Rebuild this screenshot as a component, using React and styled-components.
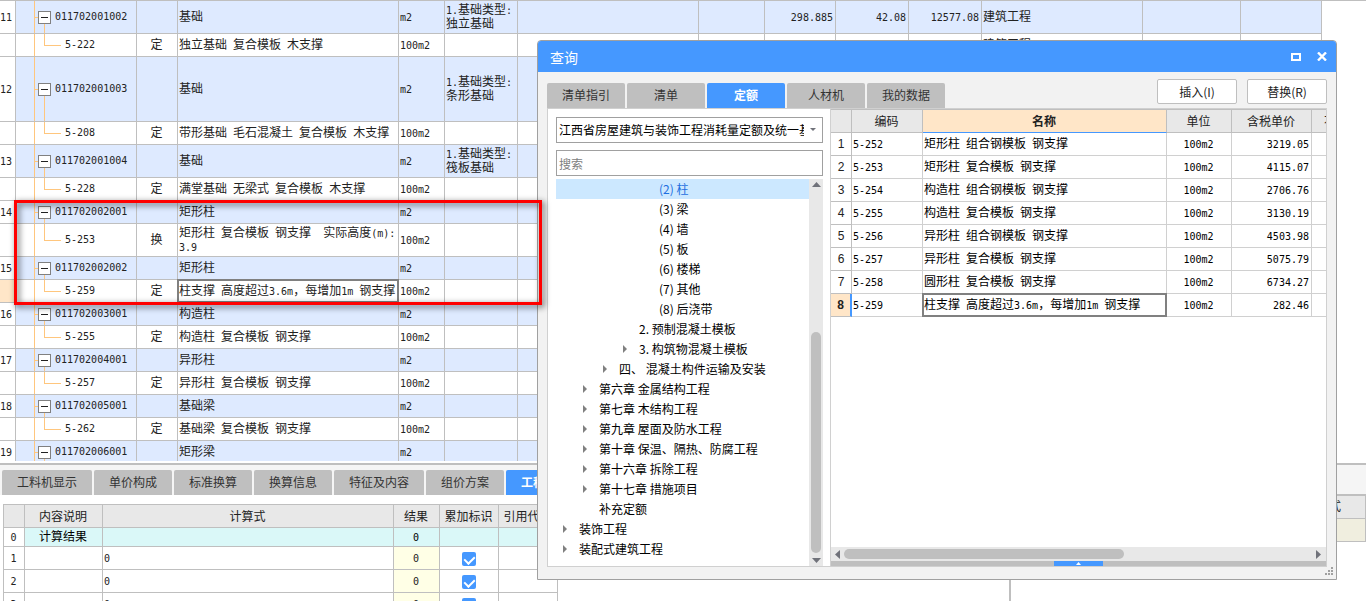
import React from "react"
import styled, { createGlobalStyle, css } from "styled-components"

const Colors = {
  blue: "#4598ff",
  line: "#bfbfbf",
  lightLine: "#d0d0d0",
  group: "#deeaff",
  head: "#e8e8e8",
  panel: "#f2f2f2",
  peach: "#ffe6c8",
  tree: "#ffc67d",
  tab: "#bfbfbf",
  arrow: "#70727a",
}

const GlobalStyle = createGlobalStyle`
  * {
    box-sizing: border-box;
  }
  body {
    margin: 0;
    background: #fff;
    color: #222;
    font: 12px/14px "Noto Sans CJK SC", sans-serif;
  }
  button, input, select {
    font: inherit;
    color: inherit;
    margin: 0;
  }
`

const Page = styled.div`
  display: flex;
  flex-direction: column;
  height: 100vh;
  overflow: hidden;
`

const Mono = styled.span`
  font-family: "DejaVu Sans Mono", monospace;
  font-size: 10px;
  line-height: 0;
`

/* grid text: half width latin next to full width hanzi */
const GridText = ({ children }) =>
  String(children)
    .split(/([\x20-\x7e]+)/)
    .filter(Boolean)
    .map((part, i) =>
      /^[\x20-\x7e]/.test(part) ? (
        <Mono key={i}>{part}</Mono>
      ) : (
        <React.Fragment key={i}>{part}</React.Fragment>
      )
    )

const Table = styled.table`
  border-collapse: separate;
  border-spacing: 0;
  table-layout: fixed;
  width: ${(p) => p.$width || "100%"};
`

const Cell = styled.td`
  height: ${(p) => p.$height || 23}px;
  padding: 0 2px 2px 1px;
  border-right: 1px solid ${(p) => p.$line || Colors.line};
  border-bottom: 1px solid ${(p) => p.$line || Colors.line};
  background-color: ${(p) => p.$bg || "transparent"};
  text-align: ${(p) => p.$align || "left"};
  vertical-align: middle;
  overflow: hidden;
  white-space: ${(p) => (p.$wrap ? "pre-wrap" : "pre")};
  ${(p) =>
    p.$selected &&
    css`
      position: relative;
      overflow: visible;
      &::after {
        content: "";
        position: absolute;
        inset: -1px;
        border: 2px solid #808080;
      }
    `}
`

const HeadCell = styled.th`
  height: ${(p) => p.$height || 24}px;
  padding: 0 1px 0 0;
  border-top: 1px solid ${Colors.line};
  border-right: 1px solid ${Colors.line};
  border-bottom: 1px solid ${(p) => (p.$active ? Colors.blue : Colors.line)};
  background: ${(p) => (p.$active ? Colors.peach : Colors.head)};
  color: #222;
  font-weight: ${(p) => (p.$active ? 700 : 400)};
  overflow: hidden;
  white-space: nowrap;
`

/* ---------- main list ---------- */

const Sheet = styled.div`
  flex: 1;
  min-height: 0;
  margin-bottom: 2px;
  overflow: hidden;
  border-top: 1px solid ${Colors.line};
`

const NameCell = styled(Cell)`
  padding-right: 0;
`

const TreeCell = styled(Cell)`
  padding: 0 0 0 ${(p) => (p.$child ? 49 : 22)}px;
  background-image: linear-gradient(${Colors.tree}, ${Colors.tree}),
    linear-gradient(${Colors.tree}, ${Colors.tree}),
    linear-gradient(${Colors.tree}, ${Colors.tree});
  background-repeat: no-repeat;
  background-size: 1px 100%,
    ${(p) => (p.$child ? "17px 1px, 1px 50%" : "4px 1px, 1px 50%")};
  background-position: 18px 0,
    ${(p) => (p.$child ? "28px 50%, 28px 0" : "18px 50%, 28px 100%")};
`

const TreeLabel = styled.div`
  display: flex;
  align-items: center;
  gap: 4px;
`

const Toggle = styled.button`
  display: flex;
  align-items: center;
  justify-content: center;
  width: 13px;
  height: 13px;
  padding: 0;
  border: 1px solid #808080;
  background: #fff;
  &::before {
    content: "";
    width: 7px;
    height: 1px;
    background: #222;
  }
`

const sheetColumns = [16, 121, 41, 221, 46, 73, 181, 66, 71, 73, 73, 161, 98, 81]

const sheetRows = [
  {
    no: "11",
    code: "011702001002",
    name: "基础",
    unit: "m2",
    note: "1.基础类型:独立基础",
    height: 33,
    values: ["298.885", "42.08", "12577.08"],
    kind: "建筑工程",
  },
  { code: "5-222", type: "定", name: "独立基础 复合模板 木支撑", unit: "100m2", kind: "建筑工程" },
  { no: "12", code: "011702001003", name: "基础", unit: "m2", note: "1.基础类型:条形基础", height: 65 },
  { code: "5-208", type: "定", name: "带形基础 毛石混凝土 复合模板 木支撑", unit: "100m2" },
  { no: "13", code: "011702001004", name: "基础", unit: "m2", note: "1.基础类型:筏板基础", height: 33 },
  { code: "5-228", type: "定", name: "满堂基础 无梁式 复合模板 木支撑", unit: "100m2" },
  { no: "14", code: "011702002001", name: "矩形柱", unit: "m2" },
  {
    code: "5-253",
    type: "换",
    name: "矩形柱 复合模板 钢支撑  实际高度(m):\n3.9",
    unit: "100m2",
    height: 33,
  },
  { no: "15", code: "011702002002", name: "矩形柱", unit: "m2" },
  {
    code: "5-259",
    type: "定",
    name: "柱支撑 高度超过3.6m，每增加1m 钢支撑",
    unit: "100m2",
    selected: true,
  },
  { no: "16", code: "011702003001", name: "构造柱", unit: "m2" },
  { code: "5-255", type: "定", name: "构造柱 复合模板 钢支撑", unit: "100m2" },
  { no: "17", code: "011702004001", name: "异形柱", unit: "m2" },
  { code: "5-257", type: "定", name: "异形柱 复合模板 钢支撑", unit: "100m2" },
  { no: "18", code: "011702005001", name: "基础梁", unit: "m2" },
  { code: "5-262", type: "定", name: "基础梁 复合模板 钢支撑", unit: "100m2" },
  { no: "19", code: "011702006001", name: "矩形梁", unit: "m2" },
]

const Columns = ({ widths }) => (
  <colgroup>
    {widths.map((width, index) => (
      <col key={index} width={width} />
    ))}
  </colgroup>
)

const NumberCell = styled(Cell)`
  padding: 0 5px 2px 0;
  text-align: right;
  overflow: visible;
`

const SheetRow = ({ row }) => {
  const child = !row.no
  const bg = child ? "#fff" : Colors.group
  const cell = { $bg: bg, $height: row.height }
  const [amount = "", price = "", total = ""] = row.values || []
  return (
    <tr>
      <NumberCell $height={row.height} $bg={row.selected ? Colors.peach : "#fff"}>
        <GridText>{row.no || ""}</GridText>
      </NumberCell>
      <TreeCell {...cell} $child={child}>
        <TreeLabel>
          {!child && <Toggle aria-label="折叠" />}
          <GridText>{row.code}</GridText>
        </TreeLabel>
      </TreeCell>
      <Cell {...cell} $align="center">{row.type}</Cell>
      <NameCell {...cell} $selected={row.selected}>
        <GridText>{row.name}</GridText>
      </NameCell>
      <Cell {...cell}><GridText>{row.unit}</GridText></Cell>
      <Cell {...cell} $wrap><GridText>{row.note || ""}</GridText></Cell>
      <Cell {...cell} />
      <Cell {...cell} />
      <Cell {...cell} $align="right"><GridText>{amount}</GridText></Cell>
      <Cell {...cell} $align="right"><GridText>{price}</GridText></Cell>
      <Cell {...cell} $align="right"><GridText>{total}</GridText></Cell>
      <Cell {...cell}>{row.kind}</Cell>
      <Cell {...cell} />
      <Cell {...cell} />
    </tr>
  )
}

/* ---------- lower pane ---------- */

const Lower = styled.div`
  display: flex;
  flex: 0 0 138px;
  border-top: 2px solid ${Colors.line};
  overflow: hidden;
`

const LowerLeft = styled.div`
  flex: 1;
  min-width: 0;
  border-right: 2px solid ${Colors.line};
`

const LowerRight = styled.div`
  flex: 0 0 355px;
`

const TabStrip = styled.div`
  display: flex;
  gap: 2px;
  height: 30px;
  padding: 5px 0 0 2px;
  background: #f5f5f5;
`

const RightStrip = styled.div`
  height: 31px;
  background: #f5f5f5;
  border-bottom: 2px solid ${Colors.line};
`

const Tab = styled.button`
  height: 25px;
  min-width: 78px;
  padding: 0 15px 2px;
  border: 0;
  border-radius: 2px 2px 0 0;
  white-space: nowrap;
  background: ${(p) => (p.$active ? Colors.blue : Colors.tab)};
  color: ${(p) => (p.$active ? "#fff" : "#333")};
  font-weight: ${(p) => (p.$active ? 700 : 400)};
`

const TableBox = styled.div`
  padding: 9px 0 0 3px;
`

const EdgeTable = styled(Table)`
  border-left: 1px solid ${Colors.line};
`

const ResultCell = styled(Cell)`
  color: #000;
`

const Check = styled.input`
  appearance: none;
  display: inline-flex;
  justify-content: center;
  width: 14px;
  height: 14px;
  border-radius: 2px;
  background: ${Colors.blue};
  vertical-align: middle;
  &:checked::after {
    content: "";
    width: 5px;
    height: 8px;
    margin-top: 2px;
    border: solid #fff;
    border-width: 0 2px 2px 0;
    transform: rotate(45deg);
  }
`

const CheckCell = styled(Cell)`
  padding: 0;
  text-align: center;
`

const lowerTabs = ["工料机显示", "单价构成", "标准换算", "换算信息", "特征及内容", "组价方案", "工程量明细"]

const LowerPane = () => (
  <Lower>
    <LowerLeft>
      <TabStrip>
        {lowerTabs.map((name) => (
          <Tab key={name} $active={name === "工程量明细"}>
            {name}
          </Tab>
        ))}
      </TabStrip>
      <TableBox>
        <EdgeTable $width="555px">
          <Columns widths={[21, 78, 291, 46, 59, 59]} />
          <thead>
            <tr>
              <HeadCell />
              <HeadCell>内容说明</HeadCell>
              <HeadCell>计算式</HeadCell>
              <HeadCell>结果</HeadCell>
              <HeadCell>累加标识</HeadCell>
              <HeadCell>引用代码</HeadCell>
            </tr>
          </thead>
          <tbody>
            <tr>
              <Cell $height={19} $align="center"><GridText>0</GridText></Cell>
              <ResultCell $height={19} $align="center" $bg="#daf8f8">计算结果</ResultCell>
              <ResultCell $height={19} $bg="#daf8f8" />
              <ResultCell $height={19} $align="center" $bg="#daf8f8">
                <GridText>0</GridText>
              </ResultCell>
              <ResultCell $height={19} $bg="#daf8f8" />
              <ResultCell $height={19} $bg="#daf8f8" />
            </tr>
            {[1, 2, 3].map((no) => (
              <tr key={no}>
                <Cell $align="center"><GridText>{no}</GridText></Cell>
                <Cell />
                <Cell><GridText>0</GridText></Cell>
                <Cell $align="center" $bg="#ffffe6"><GridText>0</GridText></Cell>
                <CheckCell>
                  <Check type="checkbox" defaultChecked aria-label={`累加标识 ${no}`} />
                </CheckCell>
                <Cell />
              </tr>
            ))}
          </tbody>
        </EdgeTable>
      </TableBox>
    </LowerLeft>
    <LowerRight>
      <RightStrip />
      <Table>
        <Columns widths={[271, 84]} />
        <tbody>
          <tr>
            <Cell $bg={Colors.head} />
            <Cell $bg={Colors.head} $align="center">计算式</Cell>
          </tr>
          <tr>
            <Cell $bg="#f0eedf" />
            <Cell $bg="#f0eedf" />
          </tr>
        </tbody>
      </Table>
    </LowerRight>
  </Lower>
)

/* ---------- query window ---------- */

const Window = styled.section`
  position: absolute;
  top: 40px;
  left: 537px;
  display: flex;
  flex-direction: column;
  width: 800px;
  height: 540px;
  border: 1px solid #a0a0a0;
  border-radius: 4px 4px 0 0;
  background: ${Colors.panel};
  color: #000;
  overflow: hidden;
`

const TitleBar = styled.header`
  display: flex;
  align-items: center;
  flex: 0 0 31px;
  gap: 16px;
  padding: 0 9px 0 12px;
  background: ${Colors.blue};
  color: #fff;
`

const Title = styled.h1`
  flex: 1;
  margin: 0;
  font-size: 14px;
  line-height: 18px;
  font-weight: 400;
`

const IconButton = styled.button`
  display: flex;
  padding: 0;
  border: 0;
  background: none;
`

const Toolbar = styled.div`
  display: flex;
  align-items: flex-end;
  flex: 0 0 36px;
  gap: 2px;
  padding: 0 9px;
`

const Actions = styled.div`
  display: flex;
  gap: 10px;
  margin: 0 0 4px auto;
`

const Action = styled.button`
  width: 80px;
  height: 25px;
  padding: 0;
  border: 1px solid ${Colors.line};
  border-radius: 2px;
  background: #fff;
  color: #222;
`

const Content = styled.div`
  display: flex;
  flex: 1;
  min-height: 0;
  margin: 0 9px;
  border: 1px solid ${Colors.lightLine};
  background: #fff;
`

const Catalog = styled.div`
  display: flex;
  flex-direction: column;
  flex: 0 0 282px;
  padding: 8px 7px 0 8px;
`

const SelectBox = styled.label`
  display: grid;
  grid-template-columns: 1fr 18px;
  align-items: center;
  height: 26px;
  margin-bottom: 7px;
  padding-left: 2px;
  border: 1px solid #a0a0a0;
`

const Select = styled.select`
  appearance: none;
  min-width: 0;
  height: 24px;
  padding: 0;
  border: 0;
  background: none;
  outline: 0;
  text-overflow: clip;
`

const Search = styled.input`
  height: 26px;
  margin-bottom: 3px;
  padding: 0 2px;
  border: 1px solid #a0a0a0;
  &::placeholder {
    color: #808080;
  }
`

const TreeBox = styled.div`
  display: flex;
  flex: 1;
  min-height: 0;
`

const Tree = styled.ul`
  flex: 1;
  margin: 0;
  padding: 0;
  list-style: none;
  overflow: hidden;
`

const TreeItem = styled.li`
  display: flex;
  align-items: center;
  height: 20px;
  padding-left: ${(p) => p.$level * 20 + 7}px;
  white-space: pre;
  background: ${(p) => (p.$active ? "#cce8ff" : "none")};
  color: ${(p) => (p.$active ? "#1e6fe0" : "inherit")};
`

const ArrowSlot = styled.span`
  display: flex;
  flex: 0 0 16px;
`

const VScroll = styled.div`
  display: flex;
  flex-direction: column;
  align-items: center;
  justify-content: space-between;
  flex: 0 0 14px;
  padding: 3px 0;
  background: ${Colors.head};
`

const VThumb = styled.div`
  width: 10px;
  height: 221px;
  margin: auto 0 5px;
  border-radius: 5px;
  background: ${Colors.line};
`

const Results = styled.div`
  display: flex;
  flex-direction: column;
  flex: 1;
  min-width: 0;
  border-left: 1px solid ${Colors.lightLine};
`

const ResultsBody = styled.div`
  flex: 1;
  min-height: 0;
  overflow: hidden;
`

const RowNo = styled(Cell)`
  padding: 0;
  text-align: center;
  color: #222;
  border-color: ${Colors.line};
  font-family: "Liberation Sans", sans-serif;
  ${(p) =>
    p.$current &&
    css`
      background: ${Colors.peach};
      border-right: 2px solid ${Colors.blue};
      font-weight: 700;
    `}
`

const HScroll = styled.div`
  display: flex;
  align-items: center;
  gap: 4px;
  height: 14px;
  padding: 0 5px 0 4px;
  background: ${Colors.head};
`

const HThumb = styled.div`
  width: 280px;
  height: 10px;
  margin-right: auto;
  border-radius: 5px;
  background: ${Colors.line};
`

const Expander = styled.div`
  display: flex;
  justify-content: center;
  height: 5px;
  background: ${Colors.line};
`

const ExpandButton = styled.button`
  display: flex;
  align-items: center;
  justify-content: center;
  width: 49px;
  height: 5px;
  padding: 0;
  border: 0;
  background: ${Colors.blue};
`

const Footer = styled.footer`
  display: flex;
  justify-content: flex-end;
  flex: 0 0 12px;
  padding-right: 3px;
`

const Triangle = ({ dir, size = 9, color = Colors.arrow }) => {
  const half = Math.ceil(size / 2)
  const shapes = {
    up: [size, half, `0,${half} ${size / 2},0 ${size},${half}`],
    down: [size, half, `0,0 ${size / 2},${half} ${size},0`],
    left: [half, size, `${half},0 0,${size / 2} ${half},${size}`],
    right: [half, size, `0,0 ${half},${size / 2} 0,${size}`],
  }
  const [width, height, points] = shapes[dir]
  return (
    <svg width={width} height={height}>
      <polygon points={points} fill={color} />
    </svg>
  )
}

const SelectArrow = () => (
  <svg width="16" height="4">
    <polygon points="6,0 12,0 9,3" fill={Colors.arrow} />
  </svg>
)

const windowTabs = ["清单指引", "清单", "定额", "人材机", "我的数据"]

const catalog = [
  { level: 4, text: "(2) 柱", active: true },
  { level: 4, text: "(3) 梁" },
  { level: 4, text: "(4) 墙" },
  { level: 4, text: "(5) 板" },
  { level: 4, text: "(6) 楼梯" },
  { level: 4, text: "(7) 其他" },
  { level: 4, text: "(8) 后浇带" },
  { level: 3, text: "2. 预制混凝土模板" },
  { level: 3, text: "3. 构筑物混凝土模板", arrow: true },
  { level: 2, text: "四、 混凝土构件运输及安装", arrow: true },
  { level: 1, text: "第六章 金属结构工程", arrow: true },
  { level: 1, text: "第七章 木结构工程", arrow: true },
  { level: 1, text: "第九章 屋面及防水工程", arrow: true },
  { level: 1, text: "第十章 保温、隔热、防腐工程", arrow: true },
  { level: 1, text: "第十六章 拆除工程", arrow: true },
  { level: 1, text: "第十七章 措施项目", arrow: true },
  { level: 1, text: "补充定额" },
  { level: 0, text: "装饰工程", arrow: true },
  { level: 0, text: "装配式建筑工程", arrow: true },
]

const results = [
  ["5-252", "矩形柱 组合钢模板 钢支撑", "3219.05"],
  ["5-253", "矩形柱 复合模板 钢支撑", "4115.07"],
  ["5-254", "构造柱 组合钢模板 钢支撑", "2706.76"],
  ["5-255", "构造柱 复合模板 钢支撑", "3130.19"],
  ["5-256", "异形柱 组合钢模板 钢支撑", "4503.98"],
  ["5-257", "异形柱 复合模板 钢支撑", "5075.79"],
  ["5-258", "圆形柱 复合模板 钢支撑", "6734.27"],
  ["5-259", "柱支撑 高度超过3.6m，每增加1m 钢支撑", "282.46"],
]

const ResultTable = () => (
  <Table $width="567px">
    <Columns widths={[21, 71, 244, 65, 80, 86]} />
    <thead>
      <tr>
        <HeadCell />
        <HeadCell>编码</HeadCell>
        <HeadCell $active>名称</HeadCell>
        <HeadCell>单位</HeadCell>
        <HeadCell>含税单价</HeadCell>
        <HeadCell>不含税单价</HeadCell>
      </tr>
    </thead>
    <tbody>
      {results.map(([code, name, price], index) => {
        const current = code === "5-259"
        return (
          <tr key={code}>
            <RowNo $current={current}>{index + 1}</RowNo>
            <Cell $line={Colors.lightLine}><GridText>{code}</GridText></Cell>
            <Cell $line={Colors.lightLine} $selected={current}>
              <GridText>{name}</GridText>
            </Cell>
            <Cell $line={Colors.lightLine} $align="center"><GridText>100m2</GridText></Cell>
            <Cell $line={Colors.lightLine} $align="right"><GridText>{price}</GridText></Cell>
            <Cell $line={Colors.lightLine} />
          </tr>
        )
      })}
    </tbody>
  </Table>
)

const QueryWindow = () => (
  <Window>
    <TitleBar>
      <Title>查询</Title>
      <IconButton aria-label="最大化">
        <svg width="10" height="8">
          <rect x="1" y="1" width="8" height="6" fill="none" stroke="#fff" strokeWidth="2" />
        </svg>
      </IconButton>
      <IconButton aria-label="关闭">
        <svg width="10" height="9">
          <path d="M1 0.5L9 8.5M9 0.5L1 8.5" stroke="#fff" strokeWidth="2.4" />
        </svg>
      </IconButton>
    </TitleBar>
    <Toolbar>
      {windowTabs.map((name) => (
        <Tab key={name} $active={name === "定额"}>
          {name}
        </Tab>
      ))}
      <Actions>
        <Action>插入(I)</Action>
        <Action>替换(R)</Action>
      </Actions>
    </Toolbar>
    <Content>
      <Catalog>
        <SelectBox>
          <Select aria-label="定额库">
            <option>江西省房屋建筑与装饰工程消耗量定额及统一基价表</option>
          </Select>
          <SelectArrow />
        </SelectBox>
        <Search type="text" placeholder="搜索" aria-label="搜索" />
        <TreeBox>
          <Tree>
            {catalog.map((item) => (
              <TreeItem key={item.text} $level={item.level} $active={item.active}>
                <ArrowSlot>
                  {item.arrow && <Triangle dir="right" size={8} color="#808080" />}
                </ArrowSlot>
                {item.text}
              </TreeItem>
            ))}
          </Tree>
          <VScroll>
            <Triangle dir="up" />
            <VThumb />
            <Triangle dir="down" />
          </VScroll>
        </TreeBox>
      </Catalog>
      <Results>
        <ResultsBody>
          <ResultTable />
        </ResultsBody>
        <HScroll>
          <Triangle dir="left" />
          <HThumb />
          <Triangle dir="right" />
        </HScroll>
        <Expander>
          <ExpandButton aria-label="展开">
            <Triangle dir="up" size={5} color="#fff" />
          </ExpandButton>
        </Expander>
      </Results>
    </Content>
    <Footer>
      <svg width="8" height="8" fill="#a0a0a0">
        <path d="M6 0h2v2h-2zM3 3h2v2h-2zM6 3h2v2h-2zM0 6h2v2h-2zM3 6h2v2h-2zM6 6h2v2h-2z" />
      </svg>
    </Footer>
  </Window>
)

const Highlight = styled.div`
  position: absolute;
  top: 200px;
  left: 14px;
  width: 528px;
  height: 105px;
  border: 3px solid #f00;
  filter: drop-shadow(2px 2px 3px rgba(0, 0, 0, 0.7));
  pointer-events: none;
`

const App = () => {
  return (
    <Page>
      <GlobalStyle />
      <Sheet>
        <Table $width="1322px">
          <Columns widths={sheetColumns} />
          <tbody>
            {sheetRows.map((row) => (
              <SheetRow key={row.code} row={row} />
            ))}
          </tbody>
        </Table>
      </Sheet>
      <LowerPane />
      <QueryWindow />
      <Highlight />
    </Page>
  )
}

export default App
